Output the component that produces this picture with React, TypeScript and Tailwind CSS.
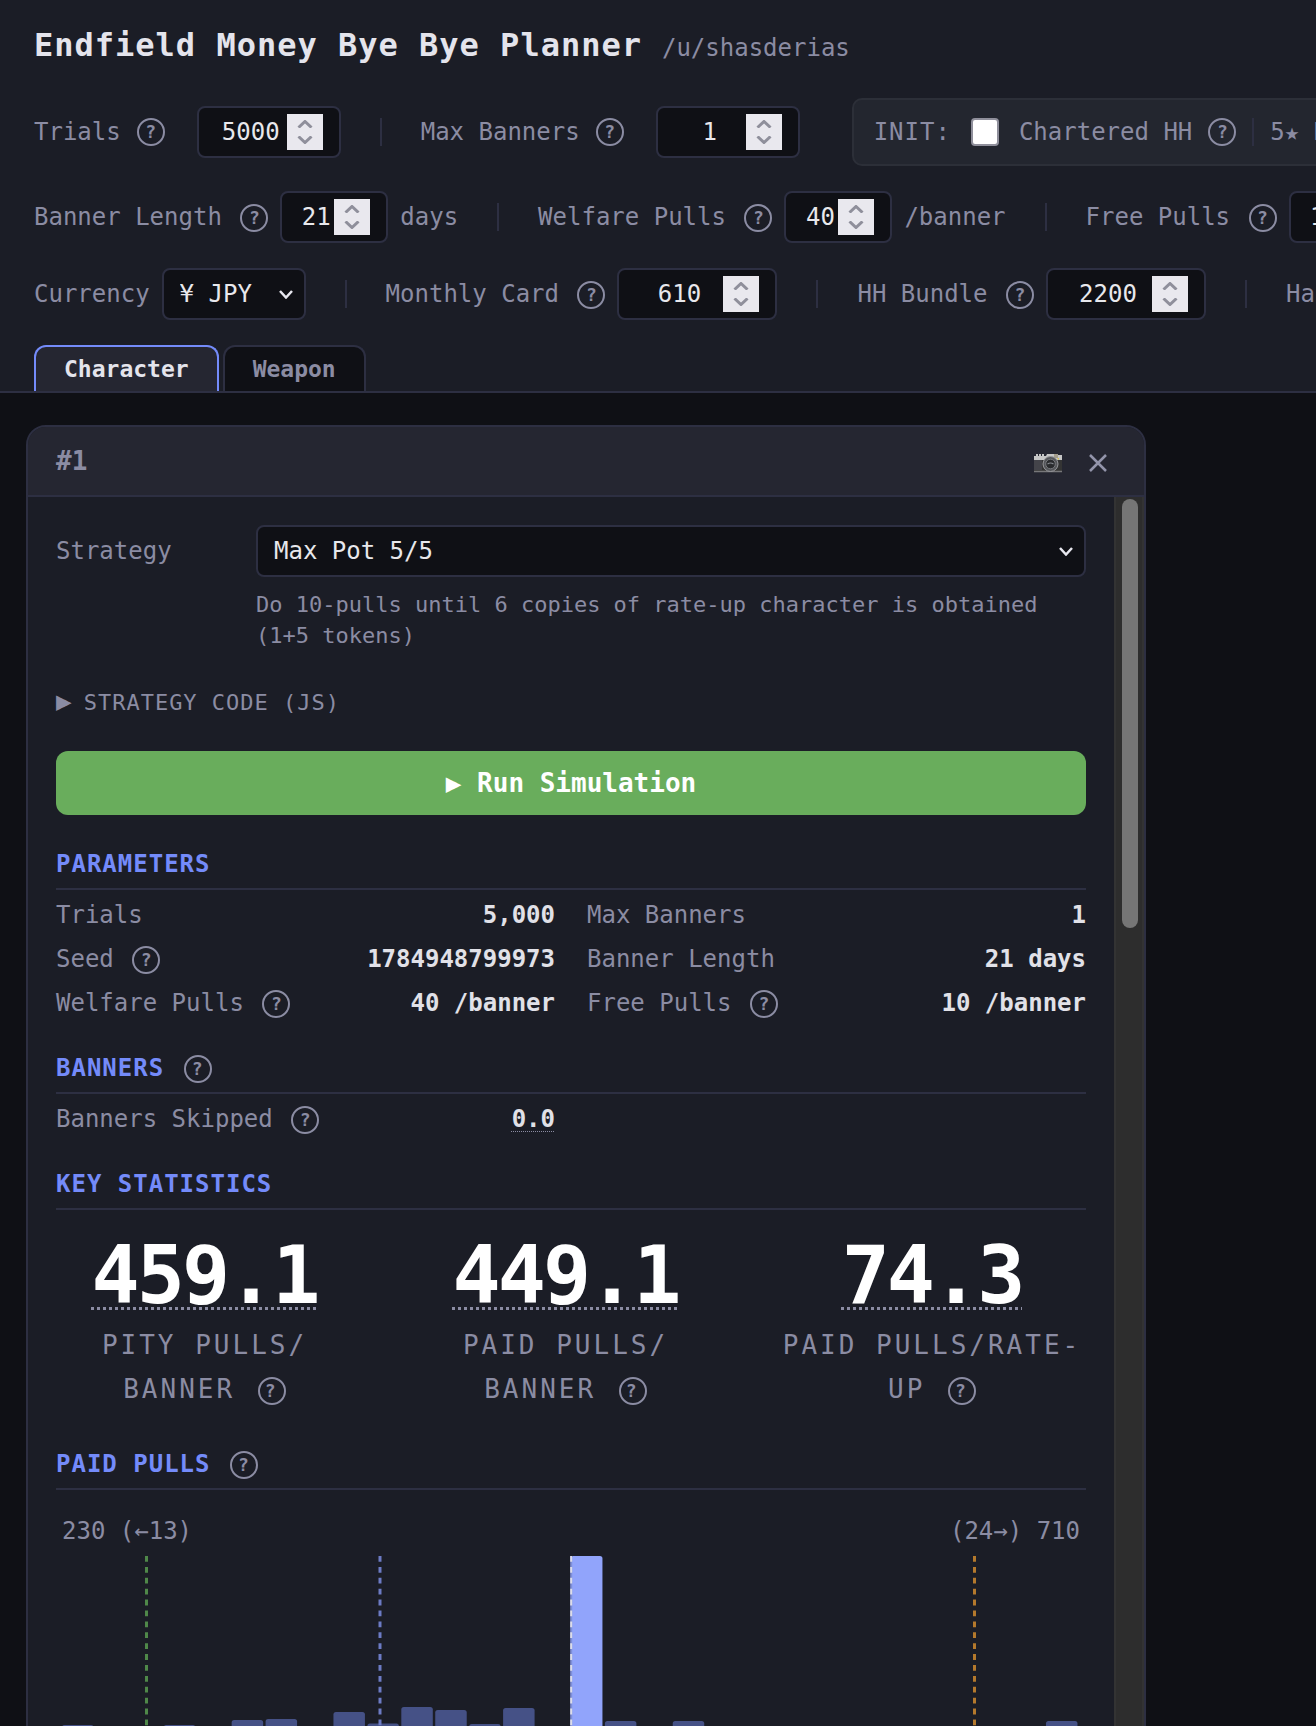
import { useState } from 'react'
import type { ReactNode } from 'react'

const bars = [
  { slot: 0, top: 169 }, { slot: 3, top: 169 }, { slot: 5, top: 164 }, { slot: 6, top: 163 },
  { slot: 8, top: 156 }, { slot: 9, top: 167.5 }, { slot: 10, top: 151 }, { slot: 11, top: 154 },
  { slot: 12, top: 168 }, { slot: 13, top: 152 }, { slot: 15, top: 0, peak: true },
  { slot: 16, top: 165 }, { slot: 18, top: 165 }, { slot: 29, top: 165 },
]

const markers = [
  { x: 84.5, color: '#4f8849' },
  { x: 318, color: '#6c7bc4' },
  { x: 912.5, color: '#b4792c' },
]

function Help() {
  return (
    <button
      type="button"
      aria-label="Help"
      className="inline-flex h-7 w-7 shrink-0 items-center justify-center rounded-full border-2 border-[#8b8ca3] align-middle text-[18px] leading-none font-bold text-[#8b8ca3]"
    >
      ?
    </button>
  )
}

// Label text with the help badge flowing after it
function HelpText({ children }: { children: ReactNode }) {
  return (
    <>
      {children} <span className="ml-1 whitespace-nowrap"><Help /></span>
    </>
  )
}

function Separator() {
  return <span className="mx-[39px] h-7 w-0.5 shrink-0 bg-[#2d2f42]" />
}

function Chevron() {
  return (
    <svg viewBox="0 0 14 9" className="pointer-events-none h-[9px] w-3.5 shrink-0 fill-none stroke-[#e8e8f0] stroke-[2.5]">
      <path d="M1 1l6 6.5L13 1" />
    </svg>
  )
}

function NumberField({ id, label, initial, className }: { id: string; label: string; initial: number; className: string }) {
  const [value, setValue] = useState(initial)

  return (
    <div className={`flex h-[52px] shrink-0 items-center rounded-lg border-2 border-[#2d2f42] bg-[#0f1015] px-4 ${className}`}>
      <input
        id={id}
        type="number"
        aria-label={label}
        value={value}
        onChange={(e) => setValue(Number(e.target.value))}
        className="w-0 min-w-0 flex-1 bg-transparent text-center text-[#e8e8ec] outline-none [appearance:textfield] [&::-webkit-inner-spin-button]:appearance-none"
      />
      <div className="flex h-9 w-9 shrink-0 flex-col items-center justify-between bg-[#e9e8ee] py-1.5">
        <button type="button" aria-label={`Increase ${label}`} onClick={() => setValue(value + 1)}>
          <svg viewBox="0 0 16 8" className="block h-2 w-4 fill-none stroke-[#8f8f9b] stroke-3"><path d="M1.5 7.5L8 1.5l6.5 6" /></svg>
        </button>
        <button type="button" aria-label={`Decrease ${label}`} onClick={() => setValue(value - 1)}>
          <svg viewBox="0 0 16 8" className="block h-2 w-4 fill-none stroke-[#8f8f9b] stroke-3"><path d="M1.5 .5L8 6.5l6.5-6" /></svg>
        </button>
      </div>
    </div>
  )
}

function Section({ title, help, children }: { title: string; help?: boolean; children: ReactNode }) {
  return (
    <section>
      <h2 className="border-b-2 border-[#2d2f42] pb-[5px] leading-[38px] font-bold tracking-[1px] text-[#748bfa]">
        {help ? <HelpText>{title}</HelpText> : title}
      </h2>
      {children}
    </section>
  )
}

function Row({ label, help, value, hint }: { label: string; help?: boolean; value: string; hint?: boolean }) {
  return (
    <div className="flex h-11 justify-between leading-[44px]">
      <dt>{help ? <HelpText>{label}</HelpText> : label}</dt>
      <dd className={`font-bold text-[#e1e1e8] ${hint ? 'underline decoration-[#8b8ca3] decoration-dotted decoration-1 underline-offset-4' : ''}`}>
        {value}
      </dd>
    </div>
  )
}

function Stat({ value, label }: { value: string; label: ReactNode }) {
  return (
    <div className="text-center">
      <div className="text-[80px] leading-[80px] font-bold tracking-[-3px] text-white underline decoration-[#8b8ca3] decoration-dotted decoration-[3px] underline-offset-4">
        {value}
      </div>
      <div className="mt-[7px] text-[26px] leading-[44px] tracking-[3px]">
        <HelpText>{label}</HelpText>
      </div>
    </div>
  )
}

function CameraIcon() {
  return (
    <svg viewBox="0 0 28 20" className="h-5 w-7">
      <path d="M0 3h2V1h2v2h1V1h2v2h1V1h2v2h2l1-2h9l1 1h5v6H0z" fill="#c6c6c6" />
      <path d="M20 1h4v4h-4z" fill="#a39c8c" />
      <path d="M0 7h28v12H0z" fill="#343434" />
      <path d="M0 7h8v10H0z" fill="#44444a" />
      <path d="M0 18.5h28" stroke="#77777a" strokeWidth="1.5" />
      <circle cx="16.5" cy="11" r="7.5" fill="#55565a" stroke="#97989c" />
      <circle cx="16.5" cy="11" r="4.8" fill="#2a2b2e" stroke="#77797d" />
      <path d="M13.5 11q3-2 6 0" stroke="#85898e" strokeWidth="1.2" fill="none" />
      <path d="M23.500 5h1.500v1.500h-1.500z" fill="#d6c04a" />
    </svg>
  )
}

function Histogram() {
  return (
    <svg viewBox="0 0 1018 180" className="block w-full" role="img" aria-label="Paid pulls distribution">
      {bars.map((bar) => (
        <rect
          key={bar.slot}
          x={bar.slot * 33.93}
          y={bar.top}
          width={31.5}
          height={180 - bar.top}
          rx={2.5}
          fill={bar.peak ? '#91a4fb' : '#455186'}
        />
      ))}
      {markers.map((m) => (
        <line key={m.x} x1={m.x} x2={m.x} y1={0} y2={180} stroke={m.color} strokeWidth={3} strokeDasharray="5.8 5.1" />
      ))}
      <line x1={509.2} x2={509.2} y1={0} y2={180} stroke="#7f8fd8" strokeWidth={2} />
      <line x1={509.2} x2={509.2} y1={0} y2={180} stroke="#dcdce6" strokeWidth={2} strokeDasharray="5.8 5.1" />
    </svg>
  )
}

export default function App() {
  const [tab, setTab] = useState('character')

  const tabClass = (name: string) =>
    tab === name
      ? 'border-[#748bfa] bg-[#252631] text-[#e4e4ec]'
      : 'border-[#2d2f42] bg-[#0f1015] text-[#8b8ca3]'

  return (
    <div className="flex h-screen flex-col overflow-hidden bg-[#0f1015] font-['DejaVu_Sans_Mono',monospace] text-[24px] text-[#8b8ca3]">
      <header className="border-b-2 border-[#2d2f42] bg-[#1b1d26] px-[34px] pt-6">
        <div className="mb-[29px] flex items-baseline gap-5 leading-[42px] whitespace-nowrap">
          <h1 className="text-[32px] font-bold tracking-[1px] text-[#e4e4ec]">Endfield Money Bye Bye Planner</h1>
          <a href="#user">/u/shasderias</a>
        </div>

        <div className="flex flex-col gap-[25px] whitespace-nowrap">
          <div className="flex h-[68px] items-center">
            <label htmlFor="trials" className="mr-4">Trials</label>
            <Help />
            <NumberField id="trials" label="Trials" initial={5000} className="ml-8 w-36" />
            <Separator />
            <label htmlFor="max-banners" className="mr-4">Max Banners</label>
            <Help />
            <NumberField id="max-banners" label="Max Banners" initial={1} className="ml-8 w-36" />
            <div className="ml-[52px] flex h-[68px] shrink-0 items-center rounded-[10px] border-2 border-[#2c2f38] bg-[#23262f] px-5">
              <span className="tracking-[1px]">INIT:</span>
              <input
                id="chartered"
                type="checkbox"
                className="mx-5 h-7 w-7 shrink-0 appearance-none rounded-[4px] border-2 border-[#8f8f9b] bg-white checked:bg-[#748bfa]"
              />
              <label htmlFor="chartered" className="mr-4">Chartered HH</label>
              <Help />
              <span className="mx-4 h-7 w-0.5 shrink-0 bg-[#2d2f42]" />
              <span>5★ HH</span>
            </div>
          </div>

          <div className="flex h-[52px] items-center">
            <label htmlFor="banner-length"><HelpText>Banner Length</HelpText></label>
            <NumberField id="banner-length" label="Banner Length" initial={21} className="mx-3 w-[108px]" />
            <span>days</span>
            <Separator />
            <label htmlFor="welfare"><HelpText>Welfare Pulls</HelpText></label>
            <NumberField id="welfare" label="Welfare Pulls" initial={40} className="mx-3 w-[108px]" />
            <span>/banner</span>
            <Separator />
            <label htmlFor="free"><HelpText>Free Pulls</HelpText></label>
            <NumberField id="free" label="Free Pulls" initial={10} className="mx-3 w-[108px]" />
          </div>

          <div className="flex h-[52px] items-center">
            <label htmlFor="currency" className="mr-3">Currency</label>
            <div className="grid shrink-0 grid-cols-1 items-center">
              <select
                id="currency"
                className="col-start-1 row-start-1 h-[52px] w-36 appearance-none rounded-lg border-2 border-[#2d2f42] bg-[#0f1015] px-4 text-[#e8e8ec]"
              >
                <option>¥ JPY</option>
                <option>$ USD</option>
              </select>
              <span className="pointer-events-none col-start-1 row-start-1 mr-[13px] justify-self-end"><Chevron /></span>
            </div>
            <Separator />
            <label htmlFor="monthly"><HelpText>Monthly Card</HelpText></label>
            <NumberField id="monthly" label="Monthly Card" initial={610} className="ml-3 w-40" />
            <Separator />
            <label htmlFor="bundle"><HelpText>HH Bundle</HelpText></label>
            <NumberField id="bundle" label="HH Bundle" initial={2200} className="ml-3 w-40" />
            <Separator />
            <span>Hard</span>
          </div>

          <div role="tablist" className="flex gap-1 text-[23px] font-bold">
            <button
              type="button"
              role="tab"
              aria-selected={tab === 'character'}
              onClick={() => setTab('character')}
              className={`h-[46px] rounded-t-xl border-2 border-b-0 px-7 ${tabClass('character')}`}
            >
              Character
            </button>
            <button
              type="button"
              role="tab"
              aria-selected={tab === 'weapon'}
              onClick={() => setTab('weapon')}
              className={`h-[46px] rounded-t-xl border-2 border-b-0 px-7 ${tabClass('weapon')}`}
            >
              Weapon
            </button>
          </div>
        </div>
      </header>

      <main className="flex min-h-0 flex-1 items-start pt-8 pr-[170px] pl-[26px]">
        <article className="min-w-0 flex-1 overflow-hidden rounded-t-[20px] border-2 border-[#2d2f42] bg-[#1b1d26]">
          <div className="flex h-[70px] items-center justify-between border-b-2 border-[#2d2f42] bg-[#252631] px-7">
            <span className="text-[26px] font-bold">#1</span>
            <div className="flex items-center gap-[27px] pt-1 pr-[9px]">
              <button type="button" aria-label="Screenshot"><CameraIcon /></button>
              <button type="button" aria-label="Close">
                <svg viewBox="0 0 18 18" className="h-[18px] w-[18px] fill-none stroke-[#9394aa] stroke-[2.5]"><path d="M1 1l16 16M17 1L1 17" /></svg>
              </button>
            </div>
          </div>

          <div className="flex">
            <div className="min-w-0 flex-1 p-7">
              <div className="flex">
                <label htmlFor="strategy" className="w-[200px] shrink-0 leading-[52px]">Strategy</label>
                <div className="min-w-0 flex-1">
                  <div className="grid grid-cols-1 items-center">
                    <select
                      id="strategy"
                      className="col-start-1 row-start-1 h-[52px] w-full appearance-none rounded-lg border-2 border-[#2d2f42] bg-[#0f1015] px-4 text-[#e8e8ec]"
                    >
                      <option>Max Pot 5/5</option>
                      <option>Single Copy</option>
                    </select>
                    <span className="pointer-events-none col-start-1 row-start-1 mr-[13px] justify-self-end"><Chevron /></span>
                  </div>
                  <p className="mt-3 text-[22px] leading-[31px]">
                    Do 10-pulls until 6 copies of rate-up character is obtained (1+5 tokens)
                  </p>
                </div>
              </div>

              <details className="mt-9 text-[22px] leading-[32px] tracking-[1px]">
                <summary className="flex list-none items-baseline gap-[11px]">
                  <span className="text-[26px] leading-none">▶</span>
                  STRATEGY CODE (JS)
                </summary>
              </details>

              <button type="button" className="mt-8 mb-[30px] h-16 w-full rounded-xl bg-[#69ad5c] text-[26px] font-bold text-white">
                ▶ Run Simulation
              </button>

              <div className="flex flex-col gap-6">
                <Section title="PARAMETERS">
                  <dl className="grid grid-cols-2 gap-x-8 pt-[3px]">
                    <Row label="Trials" value="5,000" />
                    <Row label="Max Banners" value="1" />
                    <Row label="Seed" help value="1784948799973" />
                    <Row label="Banner Length" value="21 days" />
                    <Row label="Welfare Pulls" help value="40 /banner" />
                    <Row label="Free Pulls" help value="10 /banner" />
                  </dl>
                </Section>

                <Section title="BANNERS" help>
                  <dl className="grid grid-cols-2 gap-x-8 pt-[3px]">
                    <Row label="Banners Skipped" help value="0.0" hint />
                  </dl>
                </Section>

                <Section title="KEY STATISTICS">
                  <div className="grid grid-cols-[297fr_297fr_308fr] gap-16 pt-[26px] pb-[10px]">
                    <Stat value="459.1" label={<>PITY PULLS/<wbr />BANNER</>} />
                    <Stat value="449.1" label={<>PAID PULLS/<wbr />BANNER</>} />
                    <Stat value="74.3" label="PAID PULLS/RATE-UP" />
                  </div>
                </Section>

                <Section title="PAID PULLS" help>
                  <div className="px-1.5 pt-6">
                    <div className="mb-2 flex justify-between leading-[34px]">
                      <span>230 (←13)</span>
                      <span>(24→) 710</span>
                    </div>
                    <Histogram />
                  </div>
                </Section>
              </div>
            </div>

            {/* scroll track */}
            <div className="w-[30px] shrink-0 border-x-2 border-[#333333] bg-[#2d2d2d] px-1.5 pt-0.5">
              <div className="h-[429px] w-4 rounded-full bg-[#757575]" />
            </div>
          </div>
        </article>
      </main>
    </div>
  )
}
